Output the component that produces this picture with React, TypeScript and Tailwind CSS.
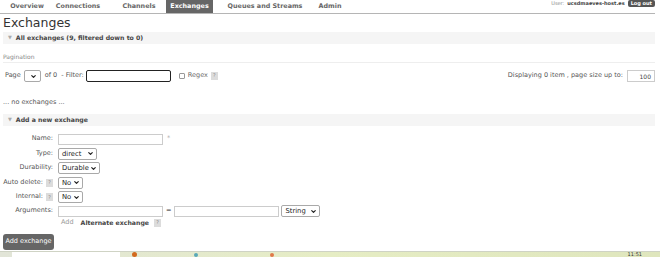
import { ChevronDown } from "lucide-react";

function Sel({ w, label }: { w: string; label: string }) {
  return (
    <div className={`${w} h-[12px] border border-[#a9a9a9] rounded-[2px] bg-white flex items-center justify-between pl-[3px] pr-[2px] text-[6.8px] text-[#222]`}>
      <span>{label}</span>
      <ChevronDown size={7} strokeWidth={4} className="text-[#222]" />
    </div>
  );
}

function Help() {
  return (
    <span className="inline-flex items-center justify-center w-[7px] h-[8px] bg-[#dcdcdc] text-[5px] text-[#888] leading-none">?</span>
  );
}

function Row({ label, help, children }: { label: string; help?: boolean; children: React.ReactNode }) {
  return (
    <div className="flex items-center h-[14.5px]">
      <div className="w-[50px] flex justify-end items-center gap-[3px] text-[#555]">
        <span>{label}</span>
        {help && <Help />}
      </div>
      <div className="ml-[5px] flex items-center">{children}</div>
    </div>
  );
}

function SectionHead({ title }: { title: string }) {
  return (
    <div className="h-[12px] bg-[#f5f5f5] flex items-center pl-[5px] gap-[4px]">
      <span className="text-[5px] text-[#aaa]">▼</span>
      <span className="font-bold text-[6.2px] text-[#444]">{title}</span>
    </div>
  );
}

const tabs = [
  { name: "Overview", cls: "ml-[4px] w-[46px]" },
  { name: "Connections", cls: "ml-[3px] w-[50px]" },
  { name: "Channels", cls: "ml-[12px] w-[48px]" },
  { name: "Exchanges", cls: "ml-[3px] w-[47px]", active: true },
  { name: "Queues and Streams", cls: "ml-[12px] w-[80px]" },
  { name: "Admin", cls: "ml-[10px] w-[30px]" },
];

export default function App() {
  return (
    <div className="w-[660px] h-[257px] bg-white overflow-hidden flex flex-col font-['DejaVu_Sans',sans-serif] text-[6.5px] text-[#555]">
      <div className="flex h-[14px] border-b border-[#b5b5b5] mr-[5px]">
        {tabs.map((t) => (
          <div
            key={t.name}
            className={`${t.cls} h-[13px] flex items-center justify-center font-bold text-[6.4px] ${t.active ? "bg-[#666] text-white" : "text-[#666]"}`}
          >
            {t.name}
          </div>
        ))}
        <div className="ml-auto h-[7px] flex items-center gap-[3px] text-[5px]">
          <span className="text-[#888]">User:</span>
          <span className="font-bold text-[#444]">ucsdmaeves-host.es</span>
          <span className="bg-[#555] text-white font-bold px-[3px] rounded-[2px] h-[7px] flex items-center">Log out</span>
        </div>
      </div>

      <div className="pl-[3px] pr-[5px]">
        <h1 className="text-[12.5px] leading-[18px] text-[#333] font-normal">Exchanges</h1>
        <SectionHead title="All exchanges (9, filtered down to 0)" />

        <div className="mt-[8px] text-[6px] leading-[9px] text-[#888] border-b border-[#eee] pb-[1px]">Pagination</div>

        <div className="mt-[7px] h-[12px] flex items-center justify-between">
          <div className="flex items-center">
            <span className="ml-[2px]">Page</span>
            <div className="ml-[3px] w-[17px] h-[12px] border border-[#a9a9a9] rounded-[2px] flex items-center justify-end pr-[3px]">
              <ChevronDown size={7} strokeWidth={4} className="text-[#222]" />
            </div>
            <span className="ml-[4px]">of 0</span>
            <span className="ml-[4px]">- Filter:</span>
            <div className="ml-[2px] w-[85px] h-[12px] border border-[#222] rounded-[2px] bg-white" />
            <div className="ml-[8px] w-[6px] h-[6px] border border-[#999] rounded-[1px]" />
            <span className="ml-[3px] text-[#666]">Regex</span>
            <span className="ml-[3px]"><Help /></span>
          </div>
          <div className="flex items-center">
            <span>Displaying 0 item , page size up to:</span>
            <div className="ml-[4px] w-[28px] h-[12px] border border-[#ccc] flex items-center justify-end pr-[3px] text-[#444] text-[6px]">100</div>
          </div>
        </div>

        <div className="mt-[17px] h-[8px] flex items-center">... no exchanges ...</div>

        <div className="mt-[7px]">
          <SectionHead title="Add a new exchange" />
        </div>

        <div className="pt-[6px]">
          <Row label="Name:">
            <div className="w-[105px] h-[11px] border border-[#ccc] bg-white" />
            <span className="ml-[4px] text-[#aaa]">*</span>
          </Row>
          <Row label="Type:">
            <Sel w="w-[39px]" label="direct" />
          </Row>
          <Row label="Durability:">
            <Sel w="w-[42px]" label="Durable" />
          </Row>
          <Row label="Auto delete:" help>
            <Sel w="w-[25px]" label="No" />
          </Row>
          <Row label="Internal:" help>
            <Sel w="w-[25px]" label="No" />
          </Row>
          <div className="flex items-center h-[13px]">
            <div className="w-[50px] text-right">Arguments:</div>
            <div className="ml-[5px] w-[105px] h-[11px] border border-[#ccc]" />
            <span className="ml-[3px] text-[#666]">=</span>
            <div className="ml-[3px] w-[105px] h-[11px] border border-[#ccc]" />
            <div className="ml-[2px]">
              <Sel w="w-[39px]" label="String" />
            </div>
          </div>
          <div className="flex items-center h-[11px] pl-[58px]">
            <span className="text-[#999]">Add</span>
            <span className="ml-[7px] font-bold text-[6.2px] text-[#444]">Alternate exchange</span>
            <span className="ml-[5px]"><Help /></span>
          </div>
        </div>

        <div className="mt-[5px] w-[51px] h-[16px] bg-[#666] rounded-[3px] text-white flex items-center justify-center">
          Add exchange
        </div>
      </div>

      <div className="mt-auto h-[6px] border-t border-[#cfd3c4] flex items-center bg-gradient-to-r from-[#e2e5d8] via-[#e6edc4] to-[#dfe6bd]">
        <div className="ml-[12px] w-[108px] h-[5px] bg-white" />
        <div className="ml-[12px] w-[5px] h-[5px] rounded-full bg-[#d2691e]" />
        <div className="ml-[57px] w-[4px] h-[4px] rounded-full bg-[#5aa9b8]" />
        <div className="ml-[72px] w-[4px] h-[4px] rounded-full bg-[#e07a4a]" />
        <span className="ml-auto mr-[18px] text-[5px] text-[#333] leading-none">11:51</span>
      </div>
    </div>
  );
}
